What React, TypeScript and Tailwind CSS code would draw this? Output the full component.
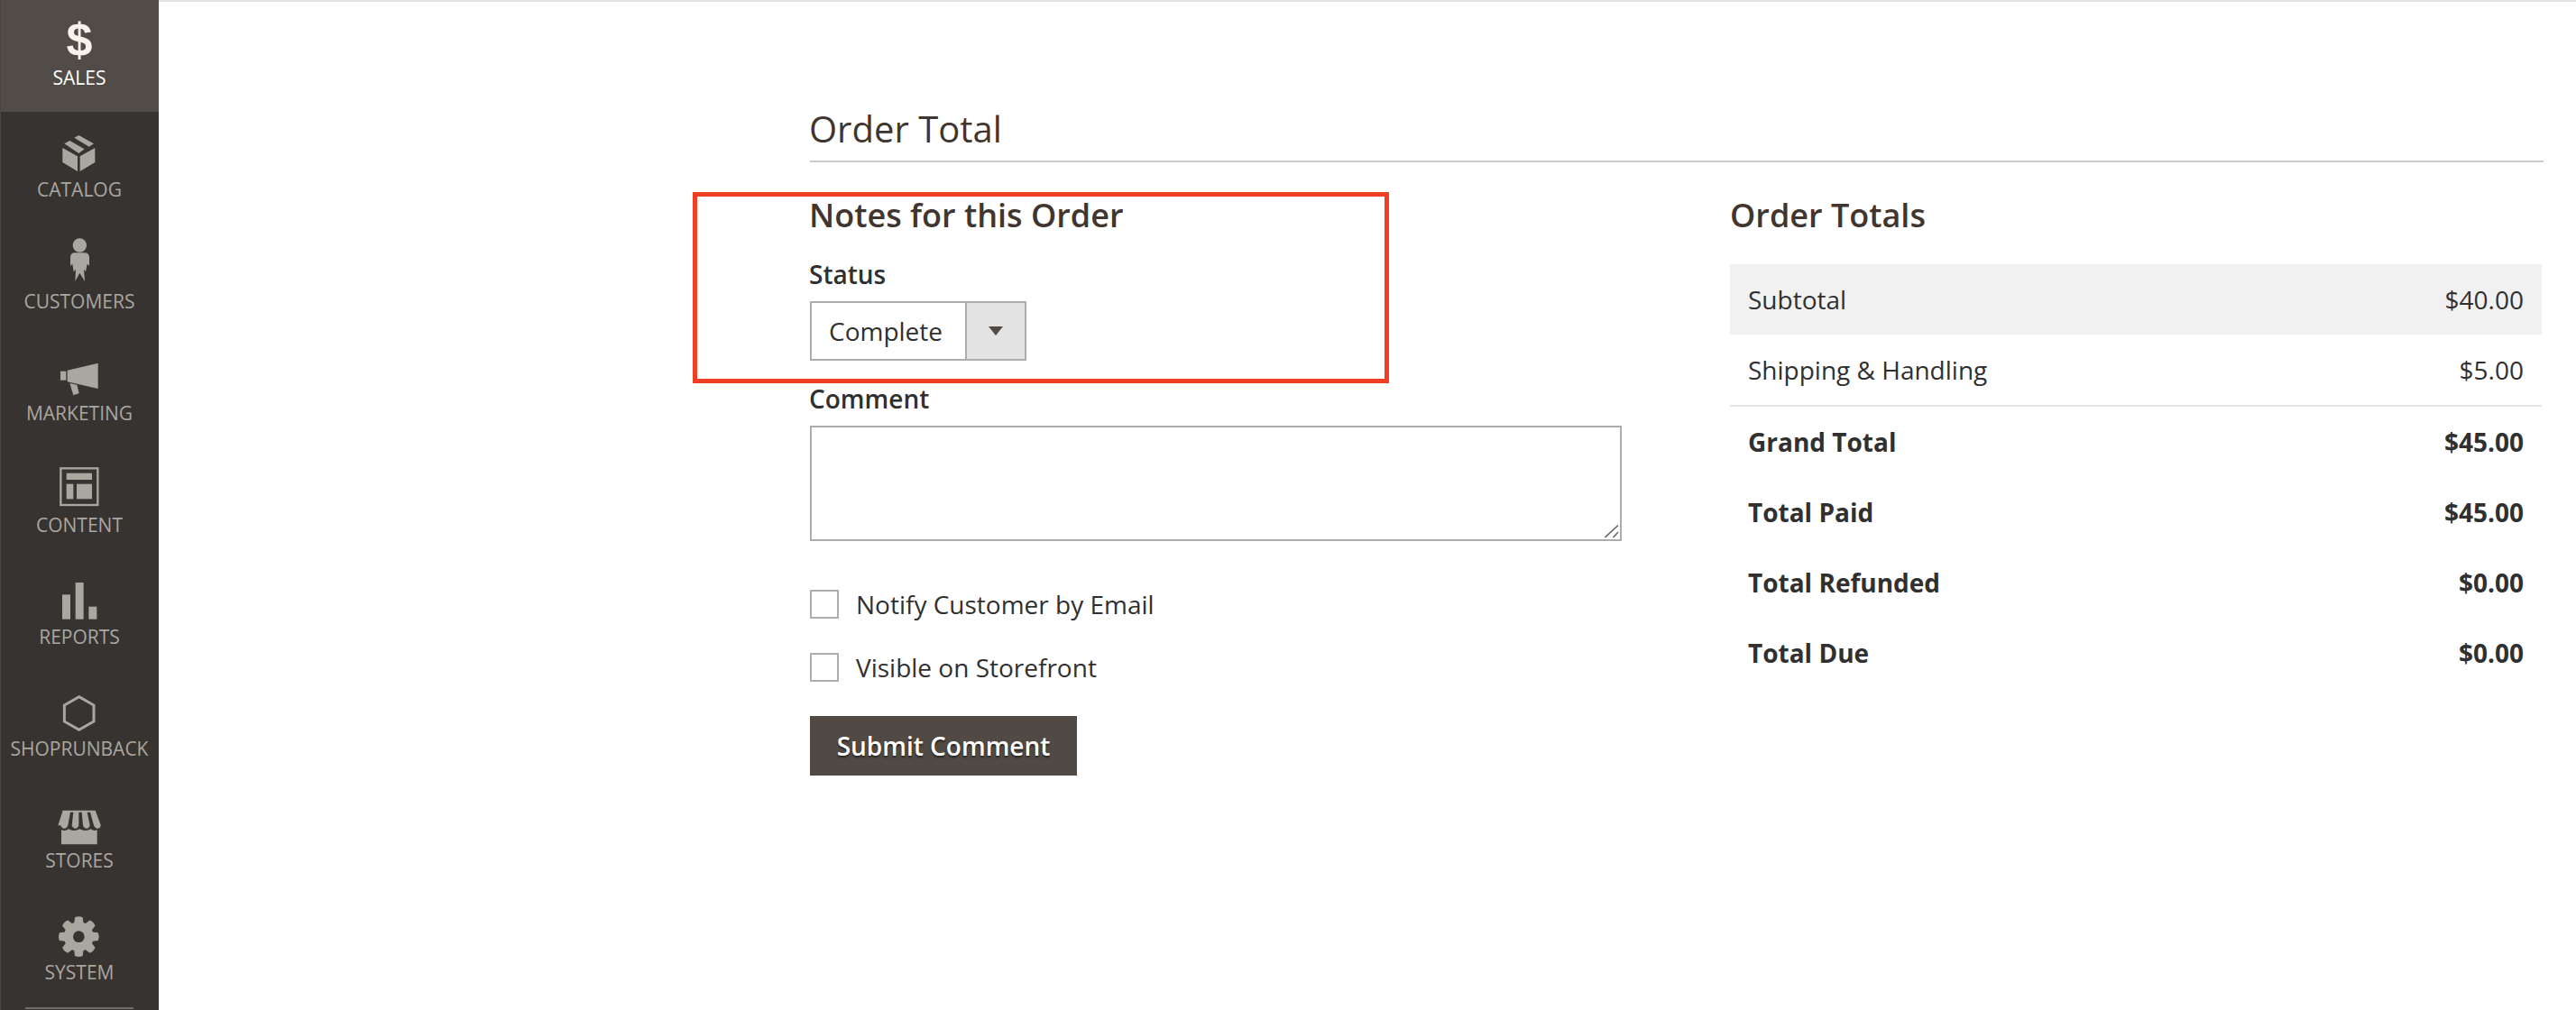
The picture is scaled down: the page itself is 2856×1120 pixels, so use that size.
import type { ReactNode } from "react";

const GEAR_TEETH = [0, 45, 90, 135, 180, 225, 270, 315];

const icons: { label: string; viewBox: string; shape: ReactNode }[] = [
  {
    label: "Catalog",
    viewBox: "174 414 180 168",
    shape: (
      <>
        <polygon points="208,492 258,520 258,570 208,540" />
        <polygon points="266,520 316,492 316,540 266,570" />
        <polygon points="247,458 262,450 312,478 296,488" />
        <polygon points="214,478 232,468 281,496 262,510" />
      </>
    ),
  },
  {
    label: "Customers",
    viewBox: "174 786 180 168",
    shape: (
      <>
        <circle cx="265" cy="816" r="23" />
        <path d="M246 841H284Q296 843 297 856V884L290 878 285 904 279 896 282 936 265 908 250 936 252 896 245 904 241 878 234 884V856Q235 843 246 841Z" />
      </>
    ),
  },
  {
    label: "Marketing",
    viewBox: "174 48 180 168",
    shape: (
      <>
        <polygon points="224,122 326,98 326,183 224,160" />
        <rect x="201" y="125" width="19" height="30" />
        <polygon points="232,165 256,170 263,198 244,205" />
      </>
    ),
  },
  {
    label: "Content",
    viewBox: "174 420 180 168",
    shape: (
      <>
        <rect x="202" y="448" width="123" height="122" fill="none" stroke="#aaa6a0" strokeWidth="7" />
        <rect x="221" y="464" width="85" height="22" />
        <rect x="221" y="500" width="23" height="50" />
        <rect x="255" y="500" width="51" height="50" />
      </>
    ),
  },
  {
    label: "Reports",
    viewBox: "174 792 180 168",
    shape: (
      <>
        <rect x="207" y="868" width="27" height="82" />
        <rect x="251" y="828" width="27" height="122" />
        <rect x="295" y="908" width="27" height="42" />
      </>
    ),
  },
  {
    label: "ShopRunBack",
    viewBox: "174 54 180 168",
    shape: (
      <polygon
        points="263,98 312,126 312,180 263,208 214,180 214,126"
        fill="none"
        stroke="#aaa6a0"
        strokeWidth="9"
      />
    ),
  },
  {
    label: "Stores",
    viewBox: "174 426 180 168",
    shape: (
      <>
        <path d="M209 476H317L335 524Q334 538 322 536 314 534 312 526L300 482H290L299 526Q296 538 285 536 277 534 276 526L272 482H262V526Q258 538 248 536 240 534 239 526L244 482H234L226 526Q222 538 211 536 203 534 202 526H193Z" />
        <path d="M204 541Q218 546 228 538 246 548 265 538 284 548 302 538 312 546 323 541V589H204Z" />
      </>
    ),
  },
  {
    label: "System",
    viewBox: "174 798 180 168",
    shape: (
      <>
        <circle cx="262" cy="896" r="49" />
        {GEAR_TEETH.map((angle) => (
          <path key={angle} d="M249 832Q262 826 275 832L278 856H246Z" transform={`rotate(${angle} 262 896)`} />
        ))}
        <circle cx="262" cy="896" r="19" fill="#373330" />
      </>
    ),
  },
];

const totals = [
  { label: "Subtotal", value: "$40.00", className: "bg-[#f1f1f1]" },
  { label: "Shipping & Handling", value: "$5.00", className: "h-[80px] border-b-2 border-[#e3e3e3]" },
  { label: "Grand Total", value: "$45.00", className: "font-bold" },
  { label: "Total Paid", value: "$45.00", className: "font-bold" },
  { label: "Total Refunded", value: "$0.00", className: "font-bold" },
  { label: "Total Due", value: "$0.00", className: "font-bold" },
];

function Sidebar() {
  return (
    <aside className="relative h-full w-[176px] shrink-0 bg-[#373330]">
      <div className="flex h-[124px] flex-col items-center bg-[#514c47] pt-[14px] text-white">
        <div className="flex h-[56px] items-center justify-center pt-[4px] text-[52px] leading-none font-bold font-['Liberation_Sans',sans-serif] text-[#f7f3eb]">
          $
        </div>
        <span className="text-[21px] leading-[32px]">SALES</span>
      </div>
      {icons.map((icon) => (
        <div key={icon.label} className="flex h-[124px] flex-col items-center pt-[14px] text-[#aaa6a0]">
          <svg viewBox={icon.viewBox} className="h-[56px] w-[60px] shrink-0" fill="#aaa6a0">
            {icon.shape}
          </svg>
          <span className="text-[21px] leading-[32px] whitespace-nowrap">{icon.label.toUpperCase()}</span>
        </div>
      ))}
      <div className="absolute bottom-[1px] left-[28px] h-[2px] w-[120px] bg-[#736e69]" />
      <div className="absolute inset-y-0 left-0 w-[1px] bg-[#4a4541]" />
    </aside>
  );
}

function CheckRow({ label }: { label: string }) {
  return (
    <label className="flex h-[32px] items-center gap-[19px] text-[28px] text-[#303030]">
      <input type="checkbox" className="size-[32px] appearance-none border-2 border-[#adadad] bg-white" />
      {label}
    </label>
  );
}

export default function App() {
  return (
    <div className="relative flex h-[1120px] w-[2856px] overflow-hidden bg-white font-['Open_Sans',sans-serif]">
      <Sidebar />
      <main className="flex-1 border-t-2 border-[#e3e3e3] pt-[116px] pr-[36px] pl-[722px]">
        <h2 className="h-[62px] border-b-2 border-[#cccccc] text-[40px] leading-[50px] font-normal text-[#41362f]">
          <span className="-ml-[1px]">Order Total</span>
        </h2>
        <div className="mt-[36px] flex">
          <section className="w-[900px] shrink-0">
            <h3 className="-ml-[1px] text-[36px] leading-[46px] font-semibold text-[#41362f]">Notes for this Order</h3>
            <div className="mt-[23px] -ml-[1px] text-[28px] leading-[38px] font-semibold text-[#303030]">Status</div>
            <div className="mt-[11px] flex h-[66px] w-[240px] border-2 border-[#adadad] bg-white">
              <span className="flex flex-1 items-center pl-[19px] text-[28px] text-[#303030]">Complete</span>
              <span className="flex w-[66px] items-center justify-center border-l-2 border-[#adadad] bg-[#e3e3e3]">
                <span className="border-x-[8px] border-t-[10px] border-x-transparent border-t-[#514943]" />
              </span>
            </div>
            <div className="mt-[23px] -ml-[1px] text-[28px] leading-[38px] font-semibold text-[#303030]">Comment</div>
            <div className="relative mt-[11px] h-[128px] w-[900px]">
              <textarea className="block size-full resize-none border-2 border-[#adadad] bg-white" />
              <svg viewBox="0 0 16 16" className="absolute right-[3px] bottom-[3px] size-[16px]" fill="none" stroke="#666666" strokeWidth="1.6">
                <path d="M0.5 15 15 1.5M9.5 15 15 9" />
              </svg>
            </div>
            <div className="mt-[54px] flex flex-col gap-[38px]">
              <CheckRow label="Notify Customer by Email" />
              <CheckRow label="Visible on Storefront" />
            </div>
            <button
              type="button"
              className="mt-[38px] flex h-[66px] w-[296px] items-center justify-center bg-[#514943] text-[28px] font-semibold text-white [text-shadow:0_2px_2px_rgba(0,0,0,0.5)]"
            >
              Submit Comment
            </button>
          </section>
          <section className="ml-[120px] flex-1">
            <h3 className="text-[36px] leading-[46px] font-semibold text-[#41362f]">Order Totals</h3>
            <div className="mt-[31px] mr-[2px] text-[28px] text-[#303030]">
              {totals.map((row) => (
                <div key={row.label} className={`flex h-[78px] items-center justify-between px-[20px] ${row.className}`}>
                  <span>{row.label}</span>
                  <span>{row.value}</span>
                </div>
              ))}
            </div>
          </section>
        </div>
      </main>
      <div className="absolute top-[213px] left-[768px] h-[212px] w-[772px] border-[5px] border-[#ef4023]" />
    </div>
  );
}
